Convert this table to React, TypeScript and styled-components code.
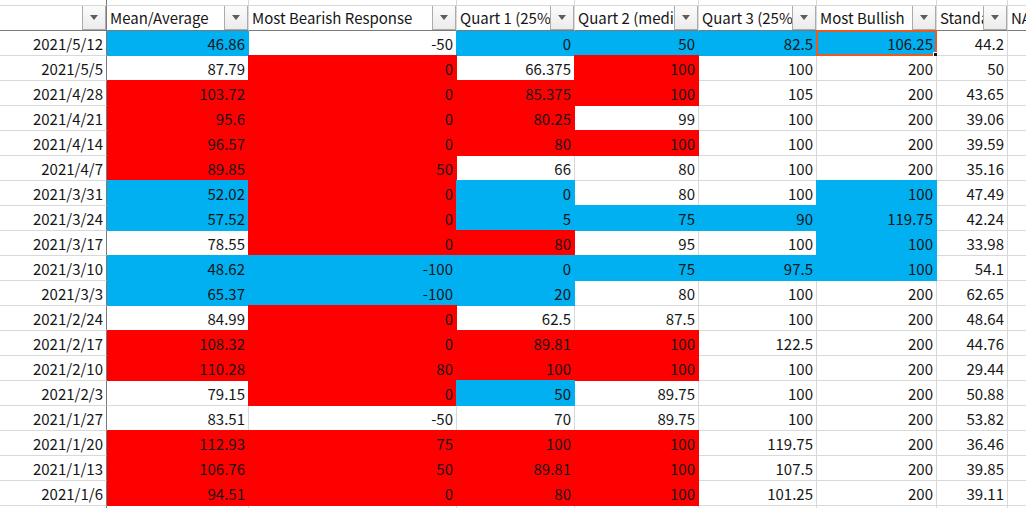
import { Fragment } from 'react';
import styled, { createGlobalStyle } from 'styled-components';

const GlobalStyle = createGlobalStyle`
  html, body {
    margin: 0;
    padding: 0;
    background: #ffffff;
    overflow: hidden;
  }
`;

const BLUE = '#00b0f0';
const RED = '#ff0000';
const GRID = '#d9d9d9';
const FREEZE = '#7a7a7a';

const widths = [107, 142, 208, 118, 124, 118, 120, 71, 60];

const headers = [
  '',
  'Mean/Average',
  'Most Bearish Response',
  'Quart 1 (25%)',
  'Quart 2 (median)',
  'Quart 3 (25%)',
  'Most Bullish',
  'Standard Deviation',
  'NA',
];

type Row = { date: string; values: string[]; fills: string };

const rows: Row[] = [
  { date: '2021/5/12', values: ['46.86', '-50', '0', '50', '82.5', '106.25', '44.2'], fills: 'BWBBBBW' },
  { date: '2021/5/5', values: ['87.79', '0', '66.375', '100', '100', '200', '50'], fills: 'WRWRWWW' },
  { date: '2021/4/28', values: ['103.72', '0', '85.375', '100', '105', '200', '43.65'], fills: 'RRRRWWW' },
  { date: '2021/4/21', values: ['95.6', '0', '80.25', '99', '100', '200', '39.06'], fills: 'RRRWWWW' },
  { date: '2021/4/14', values: ['96.57', '0', '80', '100', '100', '200', '39.59'], fills: 'RRRRWWW' },
  { date: '2021/4/7', values: ['89.85', '50', '66', '80', '100', '200', '35.16'], fills: 'RRWWWWW' },
  { date: '2021/3/31', values: ['52.02', '0', '0', '80', '100', '100', '47.49'], fills: 'BRBWWBW' },
  { date: '2021/3/24', values: ['57.52', '0', '5', '75', '90', '119.75', '42.24'], fills: 'BRBBBBW' },
  { date: '2021/3/17', values: ['78.55', '0', '80', '95', '100', '100', '33.98'], fills: 'WRRWWBW' },
  { date: '2021/3/10', values: ['48.62', '-100', '0', '75', '97.5', '100', '54.1'], fills: 'BBBBBBW' },
  { date: '2021/3/3', values: ['65.37', '-100', '20', '80', '100', '200', '62.65'], fills: 'BBBWWWW' },
  { date: '2021/2/24', values: ['84.99', '0', '62.5', '87.5', '100', '200', '48.64'], fills: 'WRWWWWW' },
  { date: '2021/2/17', values: ['108.32', '0', '89.81', '100', '122.5', '200', '44.76'], fills: 'RRRRWWW' },
  { date: '2021/2/10', values: ['110.28', '80', '100', '100', '100', '200', '29.44'], fills: 'RRRRWWW' },
  { date: '2021/2/3', values: ['79.15', '0', '50', '89.75', '100', '200', '50.88'], fills: 'WRBWWWW' },
  { date: '2021/1/27', values: ['83.51', '-50', '70', '89.75', '100', '200', '53.82'], fills: 'WWWWWWW' },
  { date: '2021/1/20', values: ['112.93', '75', '100', '100', '119.75', '200', '36.46'], fills: 'RRRRWWW' },
  { date: '2021/1/13', values: ['106.76', '50', '89.81', '100', '107.5', '200', '39.85'], fills: 'RRRRWWW' },
  { date: '2021/1/6', values: ['94.51', '0', '80', '100', '101.25', '200', '39.11'], fills: 'RRRRWWW' },
];

const fillColor = (code: string) => (code === 'B' ? BLUE : code === 'R' ? RED : '');

// shadow paints the fill over the gridlines to the left and above,
// except along the frozen-pane lines
const fillShadow = (fill: string, left: boolean, top: boolean) => {
  const parts: string[] = [];
  if (left) parts.push(`-1px 0 0 0 ${fill}`);
  if (top) parts.push(`0 -1px 0 0 ${fill}`);
  if (left && top) parts.push(`-1px -1px 0 0 ${fill}`);
  return parts.length ? parts.join(', ') : 'none';
};

const Sheet = styled.div`
  display: grid;
  grid-template-columns: ${widths.map((w) => `${w}px`).join(' ')};
  width: 1026px;
  height: 508px;
  overflow: hidden;
  font-family: 'Noto Sans CJK JP', 'Noto Sans', sans-serif;
  font-size: 15px;
  color: #161616;
`;

const Cell = styled.div<{ $fill?: string; $first?: boolean; $shadow?: string }>`
  position: relative;
  box-sizing: border-box;
  height: 25px;
  padding: 0 3px 0 2px;
  display: flex;
  align-items: center;
  justify-content: flex-end;
  white-space: nowrap;
  line-height: 1;
  background: ${(p) => p.$fill || '#ffffff'};
  border-right: 1px solid ${(p) => (p.$first ? FREEZE : p.$fill || GRID)};
  border-bottom: 1px solid ${(p) => p.$fill || GRID};
  box-shadow: ${(p) => p.$shadow || 'none'};
`;

const Strip = styled.div<{ $first?: boolean }>`
  box-sizing: border-box;
  height: 6px;
  border-right: 1px solid ${(p) => (p.$first ? FREEZE : GRID)};
  border-bottom: 1px solid ${GRID};
`;

const HeaderCell = styled.div<{ $first?: boolean }>`
  position: relative;
  box-sizing: border-box;
  height: 25px;
  padding: 0 0 2px 3px;
  display: flex;
  align-items: center;
  white-space: nowrap;
  overflow: hidden;
  line-height: 1;
  background: #ffffff;
  border-right: 1px solid ${(p) => (p.$first ? FREEZE : GRID)};
  border-bottom: 1px solid ${FREEZE};
`;

const FilterButton = styled.span`
  position: absolute;
  top: -1px;
  right: 0;
  box-sizing: border-box;
  width: 24px;
  height: 25px;
  border: 1px solid #ababab;
  background: linear-gradient(#fbfbfb, #ececec);
  display: flex;
  align-items: center;
  justify-content: center;

  &::after {
    content: '';
    width: 0;
    height: 0;
    border-left: 4px solid transparent;
    border-right: 4px solid transparent;
    border-top: 5px solid #5c5c5c;
  }
`;

const Selection = styled.span`
  position: absolute;
  left: -1px;
  top: -1px;
  right: -1px;
  bottom: -1px;
  border: 2px solid #ec5a24;
  box-shadow: 0 1px 0 0 #222222;
  pointer-events: none;

  &::after {
    content: '';
    position: absolute;
    right: -4px;
    bottom: -4px;
    width: 5px;
    height: 5px;
    background: #111111;
    border: 1px solid #ffffff;
    border-width: 1px 0 0 1px;
  }
`;

export default function App() {
  return (
    <>
      <GlobalStyle />
      <Sheet>
        {widths.map((_, i) => (
          <Strip key={`s${i}`} $first={i === 0} />
        ))}
        {headers.map((h, i) => (
          <HeaderCell key={`h${i}`} $first={i === 0}>
            {h}
            {i < 8 && <FilterButton />}
          </HeaderCell>
        ))}
        {rows.map((row, r) => (
          <Fragment key={row.date}>
            <Cell $first>{row.date}</Cell>
            {row.values.map((v, c) => {
              const fill = fillColor(row.fills[c]);
              return (
                <Cell
                  key={c}
                  $fill={fill}
                  $shadow={fill ? fillShadow(fill, c > 0, r > 0) : undefined}
                >
                  {v}
                  {r === 0 && c === 5 && <Selection />}
                </Cell>
              );
            })}
            <Cell />
          </Fragment>
        ))}
        {widths.map((_, i) => (
          <Cell key={`e${i}`} $first={i === 0} />
        ))}
      </Sheet>
    </>
  );
}
